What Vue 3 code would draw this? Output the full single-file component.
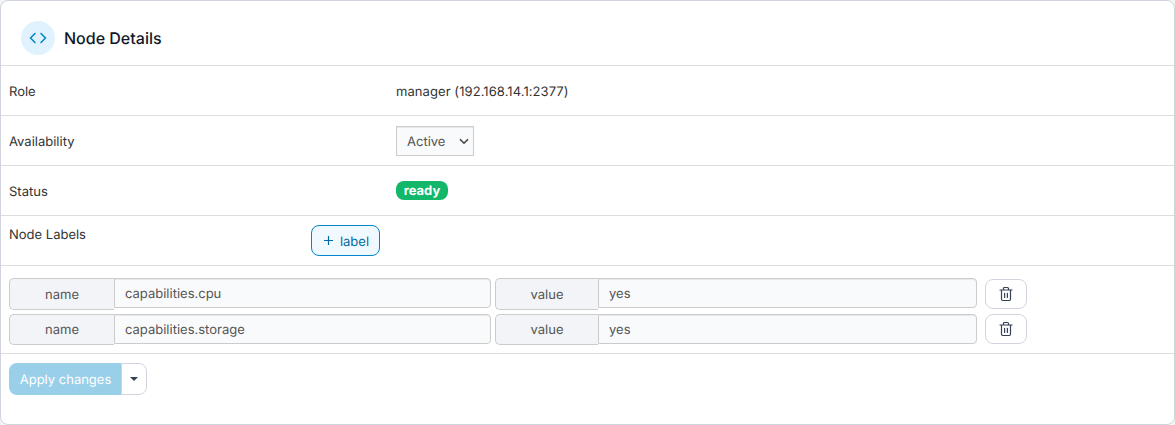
<script setup>
const labels = [
  { name: 'capabilities.cpu', value: 'yes' },
  { name: 'capabilities.storage', value: 'yes' },
]
</script>

<template>
  <section class="widget">
    <header class="header">
      <span class="badge-icon">
        <svg width="18" height="18" viewBox="0 0 24 24" fill="none" stroke="currentColor" stroke-width="2.1" stroke-linecap="round" stroke-linejoin="round">
          <polyline points="16 18 22 12 16 6" />
          <polyline points="8 6 2 12 8 18" />
        </svg>
      </span>
      <h1>Node Details</h1>
    </header>

    <div class="row">
      <span class="term">Role</span>
      <span class="role">manager (192.168.14.1:2377)</span>
    </div>
    <div class="row">
      <span class="term">Availability</span>
      <button class="select" type="button">
        <span>Active</span>
        <svg width="10" height="7" viewBox="0 0 10 7" fill="none" stroke="#444" stroke-width="1.6">
          <path d="M1 1.2 5 5.2 9 1.2" />
        </svg>
      </button>
    </div>
    <div class="row">
      <span class="term">Status</span>
      <span class="status">ready</span>
    </div>
    <div class="row labels-head">
      <span class="labels-title">Node Labels</span>
      <button class="add" type="button">
        <svg width="11" height="11" viewBox="0 0 11 11" fill="none" stroke="currentColor" stroke-width="1.2">
          <path d="M5.5 1v9M1 5.5h9" />
        </svg>
        <span>label</span>
      </button>
    </div>

    <div class="labels">
      <div v-for="(label, i) in labels" :key="label.name" class="label-row" :class="{ first: i === 0 }">
        <div class="group name-group">
          <span class="addon">name</span>
          <input v-model="label.name" type="text" />
        </div>
        <div class="group value-group">
          <span class="addon">value</span>
          <input v-model="label.value" type="text" />
        </div>
        <button class="trash" type="button" aria-label="Remove">
          <svg width="14" height="16" viewBox="0 0 14 16" fill="none" stroke="currentColor" stroke-width="1.2" stroke-linecap="round" stroke-linejoin="round">
            <path d="M1 4h12M2.5 4v9.3q0 1.2 1.2 1.2h6.6q1.2 0 1.2-1.2V4M4.5 3.8V2.6q0-1.1 1.1-1.1h2.8q1.1 0 1.1 1.1v1.2M5.6 7.3v4.2M8.4 7.3v4.2" />
          </svg>
        </button>
      </div>
    </div>

    <footer class="actions">
      <button class="apply" type="button" disabled>Apply changes</button>
      <button class="caret" type="button" aria-label="More actions"><i></i></button>
    </footer>
  </section>
</template>

<style>
body {
  background: #f2f4f7;
}
</style>

<style scoped>
* {
  box-sizing: border-box;
}

.widget {
  height: 425px;
  border: 1px solid #d0d5dd;
  border-radius: 8px;
  background: #fff;
  color: #333;
  font: 13px/18px Inter, "Liberation Sans", sans-serif;
  text-rendering: geometricPrecision;
}

button,
input {
  margin: 0;
  font: inherit;
  text-rendering: inherit;
}

.header {
  display: flex;
  align-items: center;
  gap: 9px;
  height: 64px;
  padding: 10px 20px 0;
}

.badge-icon {
  display: flex;
  align-items: center;
  justify-content: center;
  width: 34px;
  height: 34px;
  border-radius: 50%;
  background: #e0f2fe;
  color: #0086c9;
}

h1 {
  margin: 0;
  color: #101828;
  font-size: 16px;
  font-weight: 500;
  line-height: 20px;
}

.row {
  display: flex;
  align-items: center;
  height: 50px;
  padding: 1px 8px 0;
  border-top: 1px solid #ddd;
}

.term,
.role {
  padding-top: 2px;
}

.term {
  width: 387px;
}

.role {
  letter-spacing: 0.07px;
}

.select {
  display: flex;
  align-items: center;
  justify-content: space-between;
  width: 78px;
  height: 30px;
  padding: 0 4px 0 10px;
  border: 1px solid #ccc;
  border-radius: 0;
  background: #f9fafb;
  box-shadow: inset 0 1px 1px rgba(0, 0, 0, 0.075);
  color: #555;
}

.select span {
  padding-top: 2px;
}

.status {
  width: 52px;
  height: 19px;
  margin-top: -2px;
  padding-top: 1px;
  border-radius: 8px;
  background: #12b76a;
  color: #fff;
  font-weight: 700;
  line-height: 19px;
  text-align: center;
}

.labels-head {
  align-items: flex-start;
}

.labels-title {
  width: 302px;
  padding-top: 9px;
}

.add {
  display: flex;
  align-items: center;
  justify-content: center;
  gap: 6px;
  width: 69px;
  height: 31px;
  margin-top: 8px;
  padding: 0 0 0 1px;
  border: 1px solid #0086c9;
  border-radius: 8px;
  background: #f0f9ff;
  color: #026aa2;
}

.add span {
  padding-top: 2px;
}

.labels {
  height: 88px;
  padding: 12px 8px 0;
  border-top: 1px solid #ddd;
}

.label-row {
  display: flex;
  align-items: flex-start;
  height: 36px;
}

.group {
  display: flex;
  align-items: flex-start;
  width: 482px;
  margin-right: 4px;
}

.value-group {
  margin-right: 8px;
}

.addon {
  display: flex;
  align-items: center;
  justify-content: center;
  flex: none;
  width: 105px;
  height: 31px;
  padding-top: 2px;
  border: 1px solid #ccc;
  border-right: 0;
  border-radius: 5px 0 0 5px;
  background: #f2f4f7;
  color: #555;
  line-height: 17px;
}

.first .addon {
  height: 32px;
}

.value-group .addon {
  width: 103px;
}

input {
  flex: 1;
  min-width: 0;
  height: 30px;
  padding: 2px 10px 0;
  border: 1px solid #ccc;
  border-radius: 0 4px 4px 0;
  background: #f9fafb;
  box-shadow: inset 0 1px 1px rgba(0, 0, 0, 0.075);
  color: #555;
}

.trash {
  display: flex;
  align-items: center;
  justify-content: center;
  width: 42px;
  height: 30px;
  padding: 0;
  border: 1px solid #d0d5dd;
  border-radius: 8px;
  background: #fff;
  color: #344054;
}

.first .trash {
  margin-top: 1px;
}

.actions {
  display: flex;
  padding: 9px 8px 0;
  border-top: 1px solid #ddd;
}

.apply {
  width: 112px;
  height: 32px;
  padding: 2px 0 0 1px;
  border: 0;
  border-radius: 8px 0 0 8px;
  background: #99cfe9;
  color: #fff;
}

.caret {
  display: flex;
  align-items: center;
  justify-content: center;
  width: 26px;
  height: 32px;
  padding: 0;
  border: 1px solid #d0d5dd;
  border-radius: 0 8px 8px 0;
  background: #fff;
}

.caret i {
  border-top: 4px solid #344054;
  border-right: 4px solid transparent;
  border-left: 4px solid transparent;
}
</style>
